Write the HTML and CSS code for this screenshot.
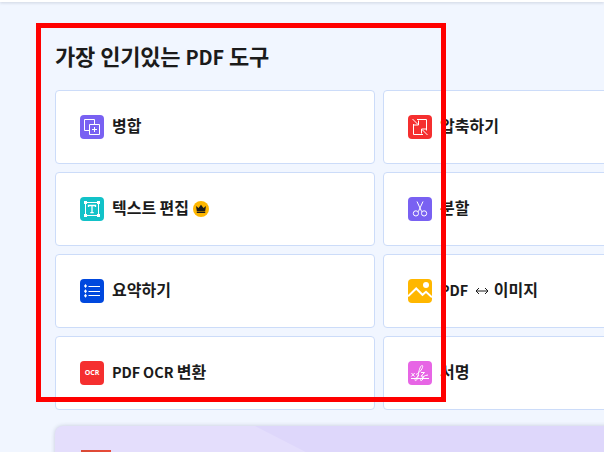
FILE: index.html
```html
<!DOCTYPE html>
<html lang="ko">
<head>
<meta charset="utf-8">
<title>PDF 도구</title>
<link rel="stylesheet" href="styles.css">
</head>
<body>
<header class="topbar"></header>
<main class="content">
  <h1 class="title">가장 인기있는 <span class="latin">PDF</span> 도구</h1>
  <div class="grid">
    <a class="card">
      <svg class="icon violet" viewBox="0 0 24 24"><path d="M9.500 15.500h-5v-11h10v5M9.500 9.500h10v10h-10zM14.500 12v5M12 14.500h5"/></svg>
      <span class="label">병합</span>
    </a>
    <a class="card">
      <svg class="icon red" viewBox="0 0 24 24"><path d="M9 4.500h9.500v11M15 19.500H5.500V9M4.500 4l5.500 5.500M10.500 5.500v4.500H6M19.500 20l-5.500-5.500M13.500 18.500V14H18"/></svg>
      <span class="label">압축하기</span>
    </a>
    <a class="card">
      <svg class="icon teal" viewBox="0 0 24 24"><path d="M5.500 5.500h13v13h-13z"/><path class="fill" d="M4 4h3v3H4zM17 4h3v3h-3zM4 17h3v3H4zM17 17h3v3h-3z"/><path d="M8.500 10V8.500h7V10M12 8.500v7M10.300 15.700h3.400" stroke-width="1.300"/></svg>
      <span class="label">텍스트 편집</span>
      <svg class="crown" viewBox="0 0 16 16"><circle cx="8" cy="8" r="8"/><path d="M3 5l2.500 2L8 3.800 10.500 7 13 5l-.8 5H3.800zM3.800 10.500h8.400V12H3.800z"/></svg>
    </a>
    <a class="card">
      <svg class="icon violet" viewBox="0 0 24 24"><path d="M9 4.500l4.700 10.200M15 4.500l-4.700 10.200"/><circle cx="7.900" cy="16.400" r="2.600"/><circle cx="16.100" cy="16.400" r="2.600"/></svg>
      <span class="label">분할</span>
    </a>
    <a class="card">
      <svg class="icon blue" viewBox="0 0 24 24"><path d="M8.500 7.500H20M8.500 12.500H20M8.500 16.500H20"/><path class="fill" d="M5.500 5l1.500 2-1.500 2L4 7zM5.500 10.300l1.500 2-1.500 2-1.500-2zM5.500 14.700l1.500 2-1.500 2L4 16.700z"/></svg>
      <span class="label">요약하기</span>
    </a>
    <a class="card">
      <svg class="icon amber" viewBox="0 0 24 24"><circle class="fill" cx="18" cy="6" r="3"/><path d="M0 17.300l8.200-7.800 6.300 6.300 3.500-3 6 5.500" stroke-width="2"/></svg>
      <span class="label mixed"><span class="latin">PDF</span> <svg class="arrow" viewBox="0 0 14 10"><path d="M1.200 5h11.600M4 2L1 5l3 3M10 2l3 3-3 3"/></svg> 이미지</span>
    </a>
    <a class="card">
      <span class="icon red ocr">OCR</span>
      <span class="label mixed"><span class="latin">PDF OCR</span> 변환</span>
    </a>
    <a class="card">
      <svg class="icon pink" viewBox="0 0 24 24"><path d="M3 17.500h18M3.500 12l3 3.500M6.700 12l-3.400 3.500"/><path d="M8 13.500c4-2 7.500-7 6.500-8.800-1.800-1.200-3.500 4.300-4.300 9.300-.6 4-1.700 6-2.900 5.500-1-.8.700-3 3.700-5.500M13 11.500h3.500l-3.500 3.700c3-.5 3 1 1.200 3.800-.8 1-2 .8-1.500-.5.500-1.500 4-4.500 7.300-4.500"/></svg>
      <span class="label">서명</span>
    </a>
  </div>
  <section class="banner">
    <svg class="facet" viewBox="0 0 640 60"><path d="M200 0h440v60H317z"/></svg>
    <div class="thumb"></div>
  </section>
</main>
<div class="highlight"></div>
</body>
</html>
```

FILE: styles.css
```css
* { box-sizing: border-box; }

body {
  margin: 0;
  height: 452px;
  overflow: hidden;
  background: #f1f6ff;
  color: #1b1b1b;
  font-family: "Noto Sans CJK KR", sans-serif;
}

.topbar {
  position: relative;
  height: 2px;
  background: #fff;
  box-shadow: 0 1px 3px rgba(40, 50, 80, .2);
}

.content {
  height: 450px;
  padding: 35px 0 0 55px;
  overflow: hidden;
}

.title {
  margin: 0;
  height: 53px;
  font-size: 22px;
  font-weight: 700;
  line-height: 36px;
  letter-spacing: -.2px;
  word-spacing: -.8px;
  white-space: nowrap;
}

.latin { font-size: .9em; }

.grid {
  display: grid;
  grid-template-columns: 320px 320px;
  grid-auto-rows: 74px;
  gap: 8px;
}

.card {
  display: flex;
  align-items: center;
  padding: 0 24px;
  background: #fff;
  border: 1px solid #ccdcf9;
  border-radius: 4px;
}

.icon {
  flex: none;
  width: 24px;
  height: 24px;
  margin-right: 8px;
  border-radius: 4px;
  fill: none;
  stroke: #fff;
  stroke-width: 1;
}

.fill { fill: #fff; stroke: none; }
.violet { background: #7961f2; }
.red { background: #f52f2f; }
.teal { background: #12c2c8; }
.blue { background: #0048de; }
.amber { background: #ffb700; }
.pink { background: #e765e5; }

.ocr {
  color: #fff;
  font-family: "Open Sans", sans-serif;
  font-size: 7px;
  font-weight: 700;
  line-height: 24px;
  text-align: center;
}

.label {
  padding-bottom: 4px;
  font-size: 16px;
  font-weight: 700;
  line-height: 24px;
  word-spacing: -1.2px;
  white-space: nowrap;
}

.label.mixed { padding-bottom: 3px; }

.crown {
  width: 16px;
  height: 16px;
  margin-left: 4.500px;
  fill: #1b1b1b;
}

.crown circle { fill: #ffb700; }

.arrow {
  width: 14px;
  height: 10px;
  margin: 0 2px 0 3px;
  fill: none;
  stroke: #1b1b1b;
}

.banner {
  position: relative;
  width: 648px;
  height: 80px;
  margin-top: 16px;
  padding: 24px 26px;
  overflow: hidden;
  background: #e4defc;
  border-radius: 8px;
  box-shadow: 0 0 4px rgba(40, 50, 80, .22);
}

.facet {
  position: absolute;
  top: 0;
  left: 0;
  width: 640px;
  height: 60px;
  fill: #ded7fb;
}

.thumb {
  position: relative;
  width: 30px;
  height: 30px;
  background: linear-gradient(90deg, #d84935, #e94b38);
}

.highlight {
  position: absolute;
  top: 23px;
  left: 36px;
  width: 410px;
  height: 379px;
  border: 5px solid #f00;
}
```
